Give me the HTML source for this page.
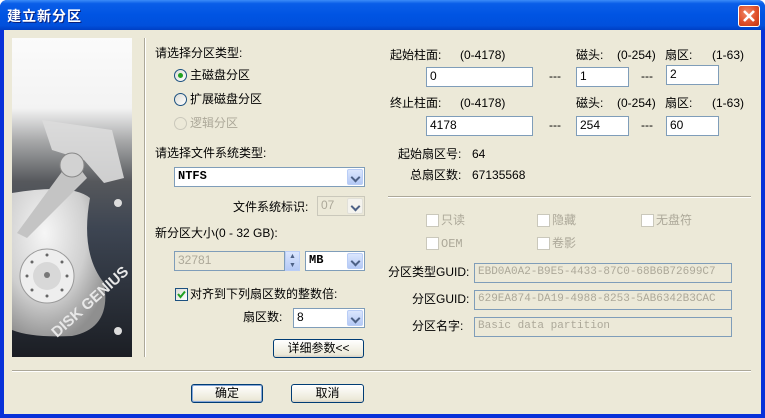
<!DOCTYPE html>
<html><head><meta charset="utf-8">
<style>
*{margin:0;padding:0;box-sizing:border-box}
body{width:765px;height:418px;overflow:hidden;background:#fff;font-family:"Liberation Sans","Noto Sans CJK SC","WenQuanYi Zen Hei",sans-serif;font-size:12px;color:#000}
#win{position:absolute;left:0;top:0;width:765px;height:418px;background:#0831d9;border-radius:7px 7px 0 0}
#title{position:absolute;left:0;top:0;width:765px;height:30px;border-radius:7px 7px 0 0;background:linear-gradient(#3c8cf8 0,#0a5ee8 12%,#0054e3 50%,#0150dc 85%,#003fc4 100%)}
#title span{position:absolute;left:7px;top:6px;color:#fff;font-weight:bold;font-size:14px;text-shadow:1px 1px #0a1f7a;letter-spacing:1px}
#close{position:absolute;left:738px;top:5px;width:22px;height:22px;border:1px solid #fff;border-radius:3px;background:radial-gradient(circle at 40% 35%,#f08a6a,#e0502a 55%,#c2350f)}
#body{position:absolute;left:4px;top:30px;width:757px;height:384px;background:#ece9d8}
.a{position:absolute;white-space:nowrap;line-height:14px}
.g{color:#aca899}
.in{position:absolute;background:#fff;border:1px solid #7f9db9;padding-left:3px;line-height:17px;font-size:12px}
.dis{background:#ece9d8;color:#aca899;font-family:"Liberation Mono",monospace;font-size:11px}
.sel{position:absolute;background:#fff;border:1px solid #7f9db9;padding-left:3px;line-height:17px}
.sel .b{position:absolute;right:1px;top:1px;bottom:1px;width:16px;border-radius:2px;background:linear-gradient(#dbe6fd,#b4c9f5);border:1px solid #b9cdf6}
.sel .b:after{content:"";position:absolute;left:4px;top:4px;width:5px;height:5px;border-right:2px solid #4d6185;border-bottom:2px solid #4d6185;transform:rotate(45deg)}
.btn{position:absolute;border:1px solid #003c74;border-radius:3px;background:linear-gradient(#fff,#ece9d8 85%,#d6d0c5);text-align:center;line-height:16px}
.rad{position:absolute;width:13px;height:13px;border-radius:50%;border:1px solid #1c5180;background:linear-gradient(135deg,#dcdcd6,#fff)}
.cb{position:absolute;width:13px;height:13px;border:1px solid #1c5180;background:linear-gradient(135deg,#dcdcd6,#fff)}
.cbd{position:absolute;width:13px;height:13px;border:1px solid #cac8bb;background:#fff}
</style></head><body>
<div id="win">
<div id="title"><span>建立新分区</span><div id="close"><svg width="20" height="20" viewBox="0 0 20 20"><path d="M5 5L15 15M15 5L5 15" stroke="#fff" stroke-width="2.6"/></svg></div></div>
</div>
<div id="body" style="left:4px"></div>
<div style="position:absolute;left:0;top:0;width:765px;height:418px">
<svg style="position:absolute;left:12px;top:38px" width="120" height="319" viewBox="0 0 120 319">
<defs><linearGradient id="bg" x1="0" y1="0" x2="0" y2="1">
<stop offset="0" stop-color="#fbfbfb"/><stop offset="0.22" stop-color="#f3f3f3"/><stop offset="0.32" stop-color="#a9aaab"/><stop offset="0.45" stop-color="#56585c"/><stop offset="0.6" stop-color="#3d4552"/><stop offset="1" stop-color="#1b1e24"/></linearGradient>
<radialGradient id="pl" cx="0.35" cy="0.3" r="0.75"><stop offset="0" stop-color="#f6f6f6"/><stop offset="0.6" stop-color="#cfcfcf"/><stop offset="1" stop-color="#8f8f8f"/></radialGradient></defs>
<rect width="120" height="319" fill="url(#bg)"/>
<path d="M0 155 Q60 145 78 160 Q68 215 92 245 Q100 290 60 298 Q20 300 0 292Z" fill="url(#pl)"/>
<circle cx="35" cy="238" r="27" fill="#eeeeee" stroke="#9a9a9a"/>
<circle cx="35" cy="238" r="14" fill="#d8d8d8"/><circle cx="35" cy="237" r="3" fill="#777"/>
<g fill="#666"><circle cx="35" cy="217" r="1.5"/><circle cx="50" cy="224" r="1.5"/><circle cx="55" cy="238" r="1.5"/><circle cx="50" cy="252" r="1.5"/><circle cx="35" cy="258" r="1.5"/><circle cx="20" cy="252" r="1.5"/><circle cx="15" cy="238" r="1.5"/><circle cx="20" cy="224" r="1.5"/></g>
<path d="M30 82 L100 92 L112 140 L92 145 L72 122 L40 112Z" fill="#dcdcdc" opacity="0.9"/>
<path d="M60 120 L5 195 L15 200 L75 140Z" fill="#c4c4c4"/>
<circle cx="60" cy="127" r="12" fill="#d2d2d2" stroke="#888"/>
<circle cx="106" cy="165" r="4" fill="#ddd"/><circle cx="106" cy="293" r="4" fill="#ddd"/>
<text x="0" y="0" transform="translate(45,300) rotate(-42)" font-family="Liberation Sans" font-weight="bold" font-size="15" fill="#e8e8e8">DISK GENIUS</text>
</svg>
<div style="position:absolute;left:144px;top:38px;width:2px;height:319px;border-left:1px solid #aca899;border-right:1px solid #fff"></div>
<div style="position:absolute;left:388px;top:196px;width:363px;height:2px;border-top:1px solid #aca899;border-bottom:1px solid #fff"></div>
<div style="position:absolute;left:12px;top:370px;width:739px;height:2px;border-top:1px solid #aca899;border-bottom:1px solid #fff"></div>

<div class="a" style="left:155px;top:46px">请选择分区类型:</div>
<div class="rad" style="left:174px;top:69px"><div style="position:absolute;left:3px;top:3px;width:5px;height:5px;border-radius:50%;background:#21a121"></div></div>
<div class="a" style="left:190px;top:68px">主磁盘分区</div>
<div class="rad" style="left:174px;top:93px"></div>
<div class="a" style="left:190px;top:92px">扩展磁盘分区</div>
<div class="rad" style="left:174px;top:117px;border-color:#cac8bb;background:#ece9d8"></div>
<div class="a g" style="left:190px;top:116px">逻辑分区</div>
<div class="a" style="left:155px;top:146px">请选择文件系统类型:</div>
<div class="sel" style="left:174px;top:167px;width:191px;height:20px;font-family:'Liberation Mono',monospace;font-weight:bold">NTFS<div class="b"></div></div>
<div class="a" style="left:233px;top:200px">文件系统标识:</div>
<div class="sel" style="left:317px;top:196px;width:48px;height:20px;background:#ece9d8;border-color:#cac8bb;color:#aca899">07<div class="b" style="background:#f4f3ee;border-color:#e1e0d8"></div></div>
<div class="a" style="left:155px;top:226px">新分区大小(0 - 32 GB):</div>
<div class="in" style="left:174px;top:251px;width:111px;height:20px;background:#ece9d8;color:#aca899">32781</div>
<div style="position:absolute;left:285px;top:251px;width:15px;height:20px;background:linear-gradient(#dbe6fd,#b4c9f5);border:1px solid #b9cdf6;font-size:7px;color:#4d6185;text-align:center;line-height:9px">▲<br>▼</div>
<div class="sel" style="left:305px;top:251px;width:60px;height:20px;font-family:'Liberation Mono',monospace;font-weight:bold">MB<div class="b"></div></div>
<div class="cb" style="left:175px;top:288px"><svg width="11" height="11" viewBox="0 0 11 11"><path d="M2 5L4.5 8L9 2.5" stroke="#21a121" stroke-width="2" fill="none"/></svg></div>
<div class="a" style="left:190px;top:287px">对齐到下列扇区数的整数倍:</div>
<div class="a" style="left:243px;top:310px">扇区数:</div>
<div class="sel" style="left:293px;top:308px;width:72px;height:20px">8<div class="b"></div></div>
<div class="btn" style="left:273px;top:339px;width:91px;height:19px">详细参数&lt;&lt;</div>
<div class="btn" style="left:191px;top:384px;width:72px;height:19px;border-color:#003c74;box-shadow:inset 0 0 0 1px #86a7d9">确定</div>
<div class="btn" style="left:291px;top:384px;width:73px;height:19px">取消</div>

<div class="a" style="left:390px;top:48px">起始柱面:</div><div class="a" style="left:460px;top:48px">(0-4178)</div>
<div class="a" style="left:576px;top:48px">磁头:</div><div class="a" style="left:617px;top:48px">(0-254)</div>
<div class="a" style="left:665px;top:48px">扇区:</div><div class="a" style="left:712px;top:48px">(1-63)</div>
<div class="in" style="left:426px;top:67px;width:107px;height:20px">0</div>
<div class="a" style="left:549px;top:69px">---</div>
<div class="in" style="left:576px;top:67px;width:53px;height:20px">1</div>
<div class="a" style="left:641px;top:69px">---</div>
<div class="in" style="left:666px;top:65px;width:53px;height:20px">2</div>
<div class="a" style="left:390px;top:96px">终止柱面:</div><div class="a" style="left:460px;top:96px">(0-4178)</div>
<div class="a" style="left:576px;top:96px">磁头:</div><div class="a" style="left:617px;top:96px">(0-254)</div>
<div class="a" style="left:665px;top:96px">扇区:</div><div class="a" style="left:712px;top:96px">(1-63)</div>
<div class="in" style="left:426px;top:116px;width:107px;height:20px">4178</div>
<div class="a" style="left:549px;top:118px">---</div>
<div class="in" style="left:576px;top:116px;width:53px;height:20px">254</div>
<div class="a" style="left:641px;top:118px">---</div>
<div class="in" style="left:666px;top:116px;width:53px;height:20px">60</div>
<div class="a" style="left:398px;top:147px">起始扇区号:</div><div class="a" style="left:472px;top:147px">64</div>
<div class="a" style="left:410px;top:168px">总扇区数:</div><div class="a" style="left:472px;top:168px">67135568</div>

<div class="cbd" style="left:426px;top:214px"></div><div class="a g" style="left:441px;top:213px">只读</div>
<div class="cbd" style="left:537px;top:214px"></div><div class="a g" style="left:552px;top:213px">隐藏</div>
<div class="cbd" style="left:641px;top:214px"></div><div class="a g" style="left:656px;top:213px">无盘符</div>
<div class="cbd" style="left:426px;top:237px"></div><div class="a g" style="left:441px;top:237px;font-family:'Liberation Mono',monospace">OEM</div>
<div class="cbd" style="left:537px;top:237px"></div><div class="a g" style="left:552px;top:236px">卷影</div>

<div class="a" style="left:388px;top:265px">分区类型GUID:</div>
<div class="in dis" style="left:474px;top:263px;width:258px;height:20px">EBD0A0A2-B9E5-4433-87C0-68B6B72699C7</div>
<div class="a" style="left:412px;top:292px">分区GUID:</div>
<div class="in dis" style="left:474px;top:290px;width:258px;height:20px">629EA874-DA19-4988-8253-5AB6342B3CAC</div>
<div class="a" style="left:412px;top:319px">分区名字:</div>
<div class="in dis" style="left:474px;top:317px;width:258px;height:20px">Basic data partition</div>
</div>
</body></html>
